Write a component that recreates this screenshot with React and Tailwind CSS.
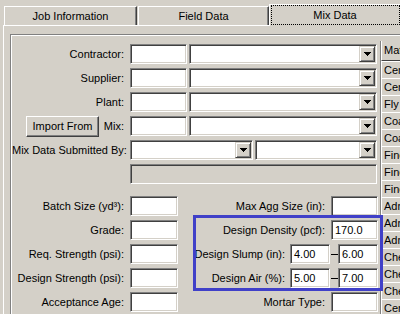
import React from "react";

const SUNKEN =
  "border border-t-[#808080] border-l-[#808080] border-r-white border-b-white shadow-[inset_1px_1px_0_#404040,inset_-1px_-1px_0_#d4d0c8]";
const RAISED =
  "border border-t-white border-l-white border-r-[#404040] border-b-[#404040] shadow-[inset_-1px_-1px_0_#808080]";

function Input({ w, value, gray }) {
  return (
    <div
      className={`${w} h-[20px] shrink-0 ${SUNKEN} ${gray ? "bg-[#d4d0c8]" : "bg-white"} flex items-center pl-[3px] text-black`}
    >
      {value}
    </div>
  );
}

function Combo({ w }) {
  return (
    <div className={`${w} h-[20px] shrink-0 ${SUNKEN} bg-white flex justify-end p-[1px]`}>
      <div
        className={`w-[16px] h-full bg-[#d4d0c8] border border-t-[#d4d0c8] border-l-[#d4d0c8] border-r-[#404040] border-b-[#404040] shadow-[inset_1px_1px_0_#fff,inset_-1px_-1px_0_#808080] flex items-center justify-center`}
      >
        <svg width="7" height="4" viewBox="0 0 7 4" shapeRendering="crispEdges">
          <path d="M0 0h7v1H0zM1 1h5v1H1zM2 2h3v1H2zM3 3h1v1H3z" fill="#000" />
        </svg>
      </div>
    </div>
  );
}

function Label({ children, className = "w-[112px]" }) {
  return <div className={`${className} text-right shrink-0 whitespace-nowrap`}>{children}</div>;
}

function LeftField({ label, value }) {
  return (
    <div className="flex items-center w-[166px] shrink-0">
      <Label>{label}</Label>
      <div className="ml-[6px]">
        <Input w="w-[48px]" value={value} />
      </div>
    </div>
  );
}

const listRows = [
  "Cement",
  "Cement",
  "Fly Ash",
  "Coarse",
  "Coarse",
  "Fine",
  "Fine",
  "Fine",
  "Admix",
  "Admix",
  "Admix",
  "Chem",
  "Chem",
  "Chem",
  "Cement",
];

export default function App() {
  return (
    <div className="relative w-[400px] h-[314px] overflow-hidden bg-[#d4d0c8] text-[11px] leading-none text-black font-['Liberation_Sans',Arial,sans-serif]">
      {/* Tabs */}
      <div className="flex items-end h-[25px] pl-[4px]">
        <div className="w-[133px] h-[19px] shrink-0 border-t border-l border-t-white border-l-white border-r border-r-[#404040] shadow-[inset_-1px_0_0_#808080] flex items-center justify-center">
          Job Information
        </div>
        <div className="ml-[1px] w-[131px] h-[19px] shrink-0 border-t border-l border-t-white border-l-white border-r border-r-[#404040] shadow-[inset_-1px_0_0_#808080] flex items-center justify-center">
          Field Data
        </div>
        <div className="relative z-10 mb-[-1px] flex-1 h-[22px] bg-[#d4d0c8] border-t border-l border-t-white border-l-white flex items-center justify-center">
          <span className="absolute left-[1px] top-0 right-0 bottom-[1px] border border-dotted border-black"></span>
          Mix Data
        </div>
      </div>

      {/* Tab panel */}
      <div className="ml-[3px] h-[289px] border-t border-l border-t-white border-l-white pl-[6px] pt-[8px]">
        <div className="h-full border-t border-l border-[#808080] shadow-[inset_1px_1px_0_#fff] pl-[1px] pt-[1px] flex">
          {/* Form */}
          <div className="w-[368px] shrink-0 pt-[8px] flex flex-col">
            <div className="flex flex-col gap-[4px]">
              <div className="flex items-center h-[20px]">
                <Label>Contractor:</Label>
                <div className="ml-[6px] flex gap-[2px]">
                  <Input w="w-[57px]" />
                  <Combo w="w-[188px]" />
                </div>
              </div>
              <div className="flex items-center h-[20px]">
                <Label>Supplier:</Label>
                <div className="ml-[6px] flex gap-[2px]">
                  <Input w="w-[57px]" />
                  <Combo w="w-[188px]" />
                </div>
              </div>
              <div className="flex items-center h-[20px]">
                <Label>Plant:</Label>
                <div className="ml-[6px] flex gap-[2px]">
                  <Input w="w-[57px]" />
                  <Combo w="w-[188px]" />
                </div>
              </div>
              <div className="flex items-start h-[20px]">
                <div className="w-[112px] shrink-0 flex items-start">
                  <button
                    className={`ml-[14px] w-[73px] h-[21px] ${RAISED} bg-[#d4d0c8] flex items-center justify-center text-[11px] leading-none`}
                  >
                    Import From
                  </button>
                  <div className="flex-1 text-right self-center">Mix:</div>
                </div>
                <div className="ml-[6px] flex gap-[2px]">
                  <Input w="w-[57px]" />
                  <Combo w="w-[188px]" />
                </div>
              </div>
              <div className="flex items-center h-[20px]">
                <Label>Mix Data Submitted By:</Label>
                <div className="ml-[6px] flex gap-[2px]">
                  <Combo w="w-[123px]" />
                  <Combo w="w-[122px]" />
                </div>
              </div>
              <div className="flex items-center h-[20px]">
                <div className="w-[112px] shrink-0"></div>
                <div className="ml-[6px]">
                  <Input w="w-[247px]" gray />
                </div>
              </div>
            </div>

            <div className="mt-[12px] flex flex-col gap-[4px]">
              <div className="flex items-center h-[20px]">
                <LeftField label="Batch Size (yd³):" />
                <div className="flex-1 flex items-center justify-end pr-[2px]">
                  <div className="whitespace-nowrap">Max Agg Size (in):</div>
                  <div className="ml-[6px]">
                    <Input w="w-[47px]" />
                  </div>
                </div>
              </div>
              <div className="flex items-center h-[20px]">
                <LeftField label="Grade:" />
                <div className="flex-1 flex items-center justify-end pr-[2px]">
                  <div className="whitespace-nowrap">Design Density (pcf):</div>
                  <div className="ml-[6px]">
                    <Input w="w-[47px]" value="170.0" />
                  </div>
                </div>
              </div>
              <div className="flex items-center h-[20px]">
                <LeftField label="Req. Strength (psi):" />
                <div className="flex-1 flex items-center justify-end pr-[2px]">
                  <div className="whitespace-nowrap">Design Slump (in):</div>
                  <div className="ml-[5px] flex items-center">
                    <Input w="w-[40px]" value="4.00" />
                    <div className="w-[8px] flex justify-center">
                      <div className="w-[7px] h-[1px] bg-black"></div>
                    </div>
                    <Input w="w-[40px]" value="6.00" />
                  </div>
                </div>
              </div>
              <div className="flex items-center h-[20px]">
                <LeftField label="Design Strength (psi):" />
                <div className="flex-1 flex items-center justify-end pr-[2px]">
                  <div className="whitespace-nowrap">Design Air (%):</div>
                  <div className="ml-[5px] flex items-center">
                    <Input w="w-[40px]" value="5.00" />
                    <div className="w-[8px] flex justify-center">
                      <div className="w-[7px] h-[1px] bg-black"></div>
                    </div>
                    <Input w="w-[40px]" value="7.00" />
                  </div>
                </div>
              </div>
              <div className="flex items-center h-[20px]">
                <LeftField label="Acceptance Age:" />
                <div className="flex-1 flex items-center justify-end pr-[2px]">
                  <div className="whitespace-nowrap">Mortar Type:</div>
                  <div className="ml-[6px]">
                    <Input w="w-[47px]" />
                  </div>
                </div>
              </div>
            </div>
          </div>

          {/* Materials list */}
          <div className="flex-1 mt-[5px] border-l border-[#808080] overflow-hidden flex flex-col">
            <div className="h-[20px] shrink-0 border-b border-b-[#404040] border-l border-l-white flex items-center pl-[2px] whitespace-nowrap">
              Material
            </div>
            {listRows.map((r, i) => (
              <div
                key={i}
                className="h-[17px] shrink-0 border-t border-white border-l border-l-white flex items-center pl-[2px] whitespace-nowrap"
              >
                {r}
              </div>
            ))}
          </div>
        </div>
      </div>

      {/* Highlight annotation */}
      <div className="absolute left-[193px] top-[215px] w-[190px] h-[76px] border-[3px] border-[#4040c8] pointer-events-none"></div>
    </div>
  );
}
